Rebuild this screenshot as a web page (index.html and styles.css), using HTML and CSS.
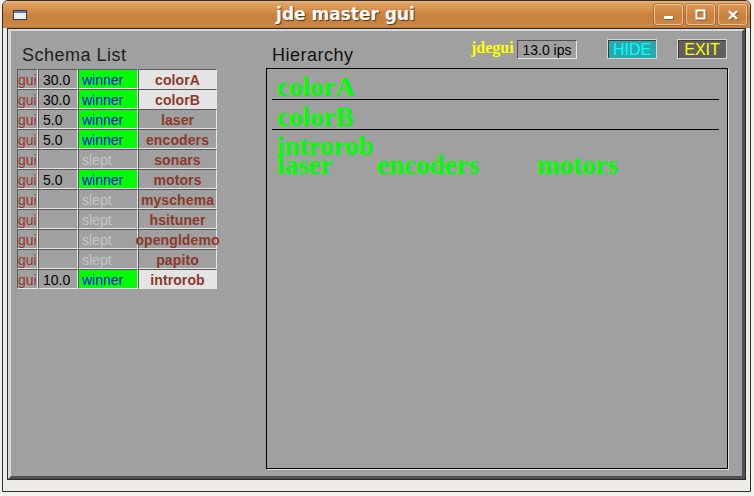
FILE: index.html
```html
<!DOCTYPE html>
<html>
<head>
<meta charset="utf-8">
<title>jde master gui</title>
<link rel="stylesheet" href="styles.css">
</head>
<body>
<div class="window">
  <div class="titlebar">
    <div class="winicon">
      <svg width="14" height="10" viewBox="0 0 14 10">
        <rect x="0.5" y="0.5" width="13" height="9" fill="#eceef2" stroke="#3c3c44"/>
        <rect x="1" y="1" width="12" height="2" fill="#5d7bb0"/>
      </svg>
    </div>
    <div class="title">jde master gui</div>
    <div class="wbtns">
      <div class="wbtn">
        <svg width="27" height="19" viewBox="0 0 27 19">
          <rect x="10" y="12" width="9" height="3" fill="#6b4620" opacity="0.7"/>
          <rect x="9" y="11" width="9" height="3" fill="#ffffff"/>
        </svg>
      </div>
      <div class="wbtn">
        <svg width="27" height="19" viewBox="0 0 27 19">
          <rect x="10.5" y="6.5" width="8" height="8" fill="none" stroke="#6b4620" stroke-width="2" opacity="0.7"/>
          <rect x="9.5" y="5.5" width="8" height="8" fill="none" stroke="#ffffff" stroke-width="2"/>
        </svg>
      </div>
      <div class="wbtn">
        <svg width="27" height="19" viewBox="0 0 27 19">
          <path d="M11 7 L19 15 M19 7 L11 15" stroke="#6b4620" stroke-width="2.4" opacity="0.7"/>
          <path d="M10 6 L18 14 M18 6 L10 14" stroke="#ffffff" stroke-width="2.4"/>
        </svg>
      </div>
    </div>
  </div>
  <div class="frame">
    <div class="client">
      <div class="app">
        <div class="left">
          <div class="label">Schema List</div>
          <div class="table">
            <div class="row"><div class="c gui">gui</div><div class="c val">30.0</div><div class="c st win">winner</div><div class="c nm hl">colorA</div></div>
            <div class="row"><div class="c gui">gui</div><div class="c val">30.0</div><div class="c st win">winner</div><div class="c nm hl">colorB</div></div>
            <div class="row"><div class="c gui">gui</div><div class="c val">5.0</div><div class="c st win">winner</div><div class="c nm">laser</div></div>
            <div class="row"><div class="c gui">gui</div><div class="c val">5.0</div><div class="c st win">winner</div><div class="c nm">encoders</div></div>
            <div class="row"><div class="c gui">gui</div><div class="c val"></div><div class="c st slept">slept</div><div class="c nm">sonars</div></div>
            <div class="row"><div class="c gui">gui</div><div class="c val">5.0</div><div class="c st win">winner</div><div class="c nm">motors</div></div>
            <div class="row"><div class="c gui">gui</div><div class="c val"></div><div class="c st slept">slept</div><div class="c nm">myschema</div></div>
            <div class="row"><div class="c gui">gui</div><div class="c val"></div><div class="c st slept">slept</div><div class="c nm">hsituner</div></div>
            <div class="row"><div class="c gui">gui</div><div class="c val"></div><div class="c st slept">slept</div><div class="c nm">opengldemo</div></div>
            <div class="row"><div class="c gui">gui</div><div class="c val"></div><div class="c st slept">slept</div><div class="c nm">papito</div></div>
            <div class="row"><div class="c gui">gui</div><div class="c val">10.0</div><div class="c st win">winner</div><div class="c nm hl">introrob</div></div>
          </div>
        </div>
        <div class="right">
          <div class="rhead">
            <div class="hlabel">Hierarchy</div>
            <div class="jde">jdegui</div>
            <div class="ips">13.0 ips</div>
            <div class="btn hide">HIDE</div>
            <div class="btn exit">EXIT</div>
          </div>
          <div class="hier">
            <div class="sec first">colorA</div>
            <div class="sec">colorB</div>
            <div class="sec last">
              <div>introrob</div>
              <div class="kids"><span class="k1">laser</span><span class="k2">encoders</span><span>motors</span></div>
            </div>
          </div>
        </div>
      </div>
    </div>
  </div>
</div>
</body>
</html>
```

FILE: styles.css
```css
* { box-sizing: border-box; }
html, body { margin: 0; padding: 0; }
body {
  width: 754px;
  height: 496px;
  background: #f4f2ee;
  overflow: hidden;
  font-family: "Liberation Sans", Arial, sans-serif;
}

.window {
  margin-left: 2px;
  width: 749px;
  height: 492px;
  border: 1px solid #2e2e2e;
  border-radius: 6px 6px 0 0;
  background: #eeeae4;
  display: flex;
  flex-direction: column;
}

.titlebar {
  height: 27px;
  display: flex;
  align-items: flex-start;
  border-radius: 5px 5px 0 0;
  background: linear-gradient(to bottom,
    #eab57d 0, #df9e5e 3px, #d28c48 10px, #c8823e 14px,
    #c8823f 21px, #ce8a47 25px, #b4733a 27px);
}
.winicon {
  margin-left: 10px;
  margin-top: 9px;
  width: 14px;
  height: 10px;
  display: flex;
}
.title {
  flex: 1;
  text-align: center;
  padding-left: 10px;
  font-family: "DejaVu Sans", sans-serif;
  font-weight: bold;
  font-size: 17px;
  line-height: 27px;
  color: #ffffff;
  text-shadow: 1px 1px 1px #4e3418;
}
.wbtns {
  display: flex;
  gap: 3px;
  margin-top: 3px;
  margin-right: 3px;
}
.wbtn {
  width: 29px;
  height: 21px;
  border: 1px solid #efc08c;
  border-radius: 3px;
  box-shadow: 0 0 0 1px rgba(110, 64, 20, 0.35);
  background: linear-gradient(to bottom, #d9954f, #c8823f 60%, #cc8744);
  display: flex;
}

.frame {
  padding: 0 4px 11px 4px;
}
.client {
  border: 1px solid #2a2a2a;
  height: 452px;
}
.app {
  height: 450px;
  background: #a0a0a0;
  border-style: solid;
  border-width: 2px 3px 3px 3px;
  border-color: #d8d8d8 #505050 #505050 #d8d8d8;
  display: flex;
}

.left {
  width: 255px;
}
.label {
  margin-left: 11px;
  margin-top: 13px;
  line-height: 22px;
  font-size: 18px;
  letter-spacing: 0.5px;
  color: #1e1e1e;
}
.table {
  margin-top: 3px;
  margin-left: 6px;
}
.row {
  display: flex;
  height: 20px;
}
.c {
  height: 20px;
  border: 1px solid;
  border-color: #585858 #e6e6e6 #e6e6e6 #585858;
  padding-top: 2px;
  line-height: 16px;
  font-size: 14px;
  white-space: nowrap;
}
.gui {
  width: 21px;
  overflow: hidden;
  color: #9e3426;
  padding-left: 0;
}
.val {
  width: 40px;
  padding-left: 4px;
  color: #000;
}
.st {
  width: 60px;
  padding-left: 3px;
}
.st.win {
  background: #00ff00;
  color: #0000ff;
}
.st.slept {
  color: #c6c6c6;
}
.nm {
  width: 79px;
  display: flex;
  justify-content: center;
  font-weight: bold;
  color: #8c382a;
  letter-spacing: 0.1px;
}
.nm.hl {
  background: #e4e4e4;
}

.right {
  width: 462px;
}
.rhead {
  height: 37px;
  display: flex;
  align-items: flex-start;
}
.hlabel {
  width: 199px;
  margin-left: 6px;
  margin-top: 13px;
  line-height: 22px;
  font-size: 18px;
  letter-spacing: 0.5px;
  color: #111;
}
.jde {
  width: 46px;
  margin-top: 8px;
  line-height: 18px;
  font-family: "Liberation Serif", "Times New Roman", serif;
  font-weight: bold;
  font-size: 16px;
  color: #ffff00;
}
.ips {
  width: 60px;
  height: 19px;
  margin-top: 9px;
  border: 1px solid;
  border-color: #505050 #e6e6e6 #e6e6e6 #505050;
  padding-top: 1px;
  line-height: 17px;
  font-size: 14px;
  text-align: center;
  color: #000;
}
.btn {
  width: 50px;
  height: 20px;
  margin-top: 8px;
  border: 1px solid #d6d6d6;
  box-shadow: inset 1px 1px 0 #3c3c3c;
  padding-top: 1px;
  line-height: 18px;
  font-size: 16px;
  text-align: center;
}
.hide {
  margin-left: 30px;
  background: #2aa9ad;
  color: #00ffff;
}
.exit {
  margin-left: 20px;
  background: #606060;
  color: #ffff00;
}

.hier {
  width: 462px;
  height: 401px;
  border: 1px solid #000;
  box-shadow: 1px 1px 0 #dcdcdc;
  font-family: "Liberation Serif", "Times New Roman", serif;
  font-weight: bold;
  font-size: 27px;
  color: #00ff00;
}
.sec {
  margin: 0 8px 0 5px;
  padding-left: 5px;
  padding-top: 2px;
  height: 30px;
  line-height: 30px;
  border-bottom: 1px solid #000;
  white-space: nowrap;
}
.sec.first {
  margin-top: 1px;
}
.sec.last {
  border-bottom: none;
  padding-top: 7px;
  line-height: 19px;
  height: auto;
}
.kids {
  display: flex;
}
.k1 { width: 100px; }
.k2 { width: 160px; }
```
